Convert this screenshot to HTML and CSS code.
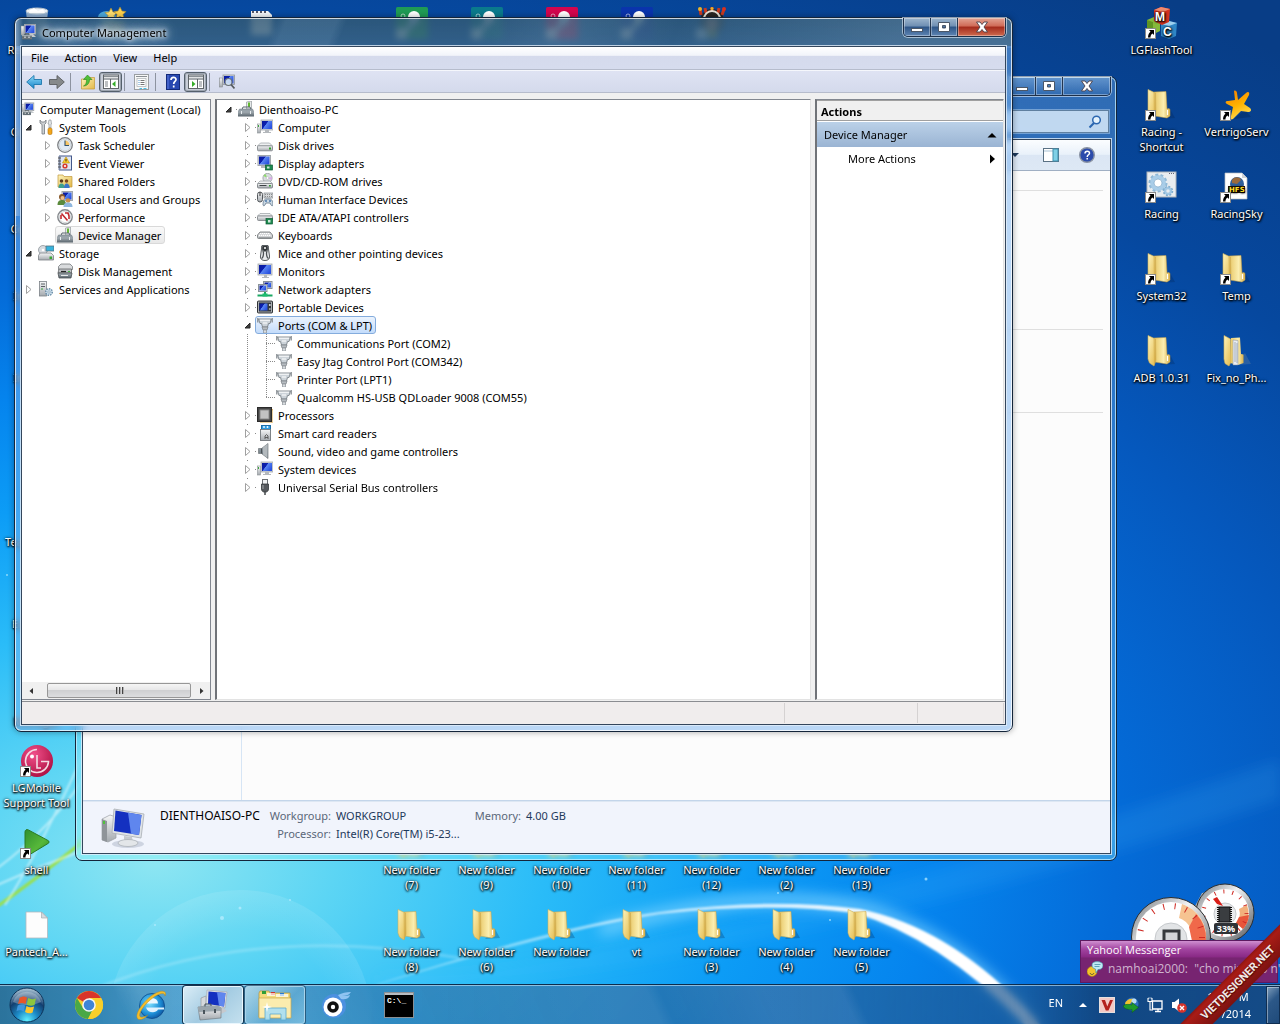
FILE: index.html
```html
<!DOCTYPE html>
<html lang="en">
<head>
    <meta charset="UTF-8">
    <title>Computer Management</title>
    <link rel="stylesheet" href="styles.css">
</head>
<body>

<!-- icon sprite -->
<svg class="sprite" width="0" height="0" aria-hidden="true">
    <defs>
        <linearGradient id="gScreen" x1="0" y1="0" x2="1" y2="0.6">
            <stop offset="0" stop-color="#0a1c9c"/><stop offset="0.45" stop-color="#0b1fb0"/>
            <stop offset="0.5" stop-color="#5a86f2"/><stop offset="1" stop-color="#2a52e0"/>
        </linearGradient>
        <linearGradient id="gMetal" x1="0" y1="0" x2="0" y2="1">
            <stop offset="0" stop-color="#f6f7f8"/><stop offset="1" stop-color="#a4a9ae"/>
        </linearGradient>
        <linearGradient id="gDark" x1="0" y1="0" x2="0" y2="1">
            <stop offset="0" stop-color="#a9b2b8"/><stop offset="1" stop-color="#58646c"/>
        </linearGradient>
        <linearGradient id="gGold" x1="0" y1="0" x2="1" y2="1">
            <stop offset="0" stop-color="#fdf3bb"/><stop offset="1" stop-color="#e3b94a"/>
        </linearGradient>
        <linearGradient id="gGold2" x1="0" y1="0" x2="1" y2="0">
            <stop offset="0" stop-color="#e8c766"/><stop offset="0.6" stop-color="#fbeeb0"/><stop offset="1" stop-color="#d9b04a"/>
        </linearGradient>
        <linearGradient id="gBlueArrow" x1="0" y1="0" x2="0" y2="1">
            <stop offset="0" stop-color="#8fdcfa"/><stop offset="1" stop-color="#1583c8"/>
        </linearGradient>
        <radialGradient id="gOrb" cx="0.5" cy="0.95" r="0.9">
            <stop offset="0" stop-color="#5ff0ff"/><stop offset="0.35" stop-color="#1d8cc8"/>
            <stop offset="0.7" stop-color="#123f70"/><stop offset="1" stop-color="#9fb9cc"/>
        </radialGradient>
        <radialGradient id="gIe" cx="0.4" cy="0.4" r="0.7">
            <stop offset="0" stop-color="#7fe0ff"/><stop offset="0.6" stop-color="#1e90d8"/><stop offset="1" stop-color="#0a4a96"/>
        </radialGradient>
        <radialGradient id="gLg" cx="0.4" cy="0.3" r="0.8">
            <stop offset="0" stop-color="#f0508a"/><stop offset="1" stop-color="#a80a3c"/>
        </radialGradient>
        <linearGradient id="gPlay" x1="0" y1="0" x2="1" y2="1">
            <stop offset="0" stop-color="#2f8f30"/><stop offset="0.6" stop-color="#57b83a"/><stop offset="1" stop-color="#2e8a22"/>
        </linearGradient>
        <linearGradient id="gStar" x1="0" y1="0" x2="0.4" y2="1">
            <stop offset="0" stop-color="#f57c00"/><stop offset="0.6" stop-color="#ffb300"/><stop offset="1" stop-color="#ffd84a"/>
        </linearGradient>
    </defs>

    <symbol id="i-monitor" viewBox="0 0 16 16">
        <rect x="1" y="1" width="14" height="11" fill="#d5d8dc" stroke="#a3a8ad" stroke-width="0.8"/>
        <rect x="2" y="2" width="12" height="9" fill="url(#gScreen)"/>
        <path d="M7 12h3v2h2v1H5v-1h2z" fill="#b4b8bc"/>
    </symbol>
    <symbol id="i-computer" viewBox="0 0 16 16">
        <rect x="0.5" y="5" width="3" height="9" fill="url(#gMetal)" stroke="#8b9094" stroke-width="0.6"/>
        <rect x="1" y="6" width="1" height="2" fill="#3aa63a"/>
        <rect x="4" y="1" width="12" height="10" fill="#d0d4d8" stroke="#a3a8ad" stroke-width="0.8"/>
        <rect x="5" y="2" width="10" height="8" fill="url(#gScreen)"/>
        <path d="M8 11h4v2h2v1H6v-1h2z" fill="#b4b8bc"/>
    </symbol>
    <symbol id="i-mgmt" viewBox="0 0 16 16">
        <rect x="0" y="2" width="3" height="9" fill="url(#gMetal)" stroke="#8b9094" stroke-width="0.5"/>
        <rect x="3.5" y="0.5" width="11" height="9.5" fill="#d0d4d8" stroke="#9ca2a8"/>
        <rect x="4.5" y="1.5" width="9" height="7.5" fill="url(#gScreen)"/>
        <path d="M8 10h4l3 3H7z" fill="#c3c8cc"/>
        <rect x="1" y="11" width="10" height="4.5" fill="url(#gDark)"/>
        <path d="M4 11V9.700h4V11M1 13h10" fill="none" stroke="#3e474e" stroke-width="0.8"/>
        <path d="M4 12.500v1.500M8 12.500v1.500" stroke="#fff"/>
    </symbol>
    <symbol id="i-devmgr" viewBox="0 0 16 16">
        <path d="M8.500 1l5-1v8h-5z" fill="#e6e9ea" stroke="#949a9e" stroke-width="0.7"/>
        <path d="M11 1.500v4.500" stroke="#63b82f" stroke-width="2"/>
        <path d="M4 8.500L5 6h7l1 2.500" fill="none" stroke="#5c6870"/>
        <path d="M1.500 8h13l1.500 3H0z" fill="#98a3aa" stroke="#6a757c" stroke-width="0.5"/>
        <rect y="10.500" width="16" height="5" fill="url(#gDark)"/>
        <path d="M3.500 10v3M12.500 10v3" stroke="#e8edf0"/>
    </symbol>
    <symbol id="i-tools" viewBox="0 0 16 16">
        <path d="M2 1v3l2 1.500V15h2.500V5.500L8 4V1L6.500 3h-3z" fill="#cdd1d4" stroke="#74797d" stroke-width="0.8"/>
        <path d="M11 1l-1 4h1v4h2V5h.5L13 1z" fill="#e4e7e9" stroke="#84898d" stroke-width="0.6"/>
        <rect x="10" y="9" width="4" height="6.500" rx="1.500" fill="#f3a61b" stroke="#b06f08" stroke-width="0.6"/>
    </symbol>
    <symbol id="i-clock" viewBox="0 0 16 16">
        <circle cx="8" cy="8" r="7.300" fill="#eef3f8" stroke="#7d8084" stroke-width="1.300"/>
        <circle cx="8" cy="8" r="5.800" fill="#dfeaf5" stroke="#c3c7ca" stroke-width="0.6"/>
        <path d="M8 8h4.500A4.500 4.500 0 0 0 8 3.500z" fill="#f7c667"/>
        <path d="M8 3.500V8.500h4" fill="none" stroke="#33556f" stroke-width="1.100"/>
    </symbol>
    <symbol id="i-event" viewBox="0 0 16 16">
        <rect x="2.500" y="1" width="12" height="14" fill="#dfe6f3" stroke="#44598b"/>
        <path d="M2.500 1v14" stroke="#7d8aa8" stroke-width="2"/>
        <path d="M1 3h3M1 6h3M1 9h3M1 12h3" stroke="#555"/>
        <path d="M9 2l3.500 6h-7z" fill="#ffcf2e" stroke="#b48a00" stroke-width="0.6"/>
        <path d="M9 4v2.500" stroke="#000" stroke-width="0.8"/>
        <circle cx="8" cy="11" r="2.600" fill="#d63a2f"/>
        <path d="M7 10l2 2M9 10l-2 2" stroke="#fff" stroke-width="0.800"/>
    </symbol>
    <symbol id="i-shared" viewBox="0 0 16 16">
        <path d="M1 2h5l1 1.500h8V14H1z" fill="url(#gGold)" stroke="#c1983b" stroke-width="0.7"/>
        <circle cx="4.500" cy="8" r="1.800" fill="#5a3a1e"/>
        <circle cx="9.500" cy="8" r="1.800" fill="#7b4a22"/>
        <path d="M1.500 15c0-3 1-4.500 3-4.500s3 1.500 3 4.500z" fill="#3fa08f"/>
        <path d="M7 15c0-3 1-4.500 2.700-4.500s3 1.500 3 4.500z" fill="#3b76c9"/>
    </symbol>
    <symbol id="i-users" viewBox="0 0 16 16">
        <rect x="5" y="0.500" width="10.500" height="9" fill="#d0d4d8" stroke="#a3a8ad"/>
        <rect x="6" y="1.500" width="8.500" height="7" fill="url(#gScreen)"/>
        <circle cx="5" cy="6" r="3" fill="#8a5a2b"/>
        <circle cx="5.500" cy="7" r="2" fill="#efbf8d"/>
        <path d="M0.500 14c0-4 2-5 4.500-5s4 1 4 5z" fill="#5b8a3c"/>
        <circle cx="11" cy="9.500" r="2.300" fill="#c98f4b"/>
        <path d="M6.500 16c0-3.500 2-4.500 4.500-4.500s4.500 1 4.500 4.500z" fill="#8fb7de"/>
    </symbol>
    <symbol id="i-perf" viewBox="0 0 16 16">
        <circle cx="8" cy="8" r="7.200" fill="#fff" stroke="#84888c" stroke-width="1.400"/>
        <circle cx="8" cy="8" r="5.600" fill="none" stroke="#d4d7d9"/>
        <path d="M4.500 4.500L10.500 11.500M4 6v4M8 4h3l1 3v3" fill="none" stroke="#c2272d" stroke-width="1.600"/>
    </symbol>
    <symbol id="i-storage" viewBox="0 0 16 16">
        <circle cx="5" cy="5" r="4.500" fill="#d6dbe0" stroke="#8e959b" stroke-width="0.8"/>
        <circle cx="5" cy="5" r="1.300" fill="#fff"/>
        <rect x="8" y="1" width="8" height="5" fill="#38b3dc" stroke="#57727f" stroke-width="0.8"/>
        <path d="M2 8h11l2.500 2.500v4.500H0.500v-4.500z" fill="url(#gMetal)" stroke="#7c8287" stroke-width="0.8"/>
        <rect x="11.500" y="11.500" width="2.500" height="2.500" fill="#39a735"/>
    </symbol>
    <symbol id="i-diskmgmt" viewBox="0 0 16 16">
        <path d="M4 1h9l2.500 2.500v3H1.500v-3z" fill="#d9dbdd" stroke="#75797c" stroke-width="0.8"/>
        <path d="M2 6h12.500v4H1z" fill="#bfc2c5" stroke="#5f6366" stroke-width="0.8"/>
        <path d="M1 10h14l-1 5H2z" fill="url(#gDark)" stroke="#4d5154" stroke-width="0.8"/>
        <path d="M4 8.500h5" stroke="#222" stroke-width="1.200"/><path d="M11 8.500h2" stroke="#3fb83c" stroke-width="1.200"/>
        <path d="M4 12.500h7" stroke="#e8eaeb"/>
    </symbol>
    <symbol id="i-services" viewBox="0 0 16 16">
        <rect x="1.500" y="0.500" width="7" height="14.500" fill="url(#gMetal)" stroke="#7c8287" stroke-width="0.8"/>
        <path d="M3 3h4M3 5.500h4" stroke="#5b6065"/><path d="M3 8h2" stroke="#3aa63a"/>
        <circle cx="11" cy="11" r="3.300" fill="#cfe1ee" stroke="#6d90aa" stroke-width="1.500" stroke-dasharray="1.500 1"/>
        <circle cx="11" cy="11" r="1.200" fill="#fff" stroke="#6d90aa" stroke-width="0.7"/>
    </symbol>
    <symbol id="i-disk" viewBox="0 0 16 16">
        <path d="M3.500 6h9L15.500 9H0.500z" fill="#eef0f1" stroke="#9a9fa3" stroke-width="0.7"/>
        <rect x="0.500" y="8.800" width="15" height="5" rx="1" fill="url(#gMetal)" stroke="#84898d" stroke-width="0.9"/>
        <rect x="12" y="10.500" width="2" height="2" fill="#2f9e2c"/>
    </symbol>
    <symbol id="i-display" viewBox="0 0 16 16">
        <rect x="1" y="0.500" width="12.500" height="10" fill="#d5d8dc" stroke="#a3a8ad"/>
        <rect x="2" y="1.500" width="10.500" height="8" fill="url(#gScreen)"/>
        <path d="M4 11h5v2H4z" fill="#b4b8bc"/>
        <rect x="8.500" y="10" width="7" height="5" fill="#1d8a50" stroke="#0e5a32" stroke-width="0.7"/>
        <rect x="10" y="11.500" width="2.500" height="2" fill="#cfe7d8"/>
    </symbol>
    <symbol id="i-dvd" viewBox="0 0 16 16">
        <circle cx="10.500" cy="5" r="4.600" fill="#d8dcdf" stroke="#979ca0" stroke-width="0.8"/>
        <path d="M10.500 5l-2-4a4.500 4.500 0 0 0-2 2z" fill="#8edb6b"/><path d="M10.500 5l4 2a4.500 4.500 0 0 0 .3-3z" fill="#d9a7e8"/>
        <circle cx="10.500" cy="5" r="1.400" fill="#fff" stroke="#a5aaad" stroke-width="0.5"/>
        <path d="M3 8h10l2.500 2.500H0.500z" fill="#eef0f1" stroke="#9a9fa3" stroke-width="0.7"/>
        <rect x="0.500" y="10.500" width="15" height="4.500" rx="1" fill="url(#gMetal)" stroke="#7d8286" stroke-width="0.9"/>
        <path d="M2.500 12.500h7" stroke="#3d4245"/><rect x="12" y="12" width="1.800" height="1.500" fill="#2f9e2c"/>
    </symbol>
    <symbol id="i-hid" viewBox="0 0 16 16">
        <rect x="0.500" y="1" width="5" height="10" rx="2.500" fill="url(#gMetal)" stroke="#54595d"/>
        <path d="M3 1v4" stroke="#333"/>
        <rect x="7" y="2" width="9" height="5" fill="#d5d8da" stroke="#84898d" stroke-width="0.7"/>
        <path d="M8 3.500h7M8 5.500h7" stroke="#777" stroke-width="0.8" stroke-dasharray="1 1"/>
        <path d="M6 14c0-4 1.500-6 3-6h4c1.500 0 3 2 3 6-1 2-2 0-3-2H9c-1 2-2 4-3 2z" fill="#c9d8e4" stroke="#5f7486" stroke-width="0.8"/>
        <circle cx="9" cy="10" r="0.900" fill="#3b6ea5"/><circle cx="13" cy="10" r="0.900" fill="#3b6ea5"/>
    </symbol>
    <symbol id="i-ide" viewBox="0 0 16 16">
        <path d="M3 4.500h10L15.500 7H0.500z" fill="#eef0f1" stroke="#9a9fa3" stroke-width="0.7"/>
        <rect x="0.500" y="7" width="15" height="4.500" rx="1" fill="url(#gMetal)" stroke="#84898d" stroke-width="0.9"/>
        <rect x="9" y="9.500" width="6.500" height="5.500" fill="#1d8a50" stroke="#0e5a32" stroke-width="0.7"/>
        <rect x="11" y="11" width="2.500" height="2.500" fill="#cfe7d8"/>
    </symbol>
    <symbol id="i-keyboard" viewBox="0 0 16 16">
        <path d="M3 5h10l2.500 3v2.500a1 1 0 0 1-1 1h-13a1 1 0 0 1-1-1V8z" fill="#d0d2d4" stroke="#6d7174" stroke-width="0.8"/>
        <path d="M3 6.500h10M2 8.300h12" stroke="#fff" stroke-width="1.200" stroke-dasharray="1.300 0.700"/>
        <path d="M1.500 10.500h13" stroke="#8c9093" stroke-width="0.8"/>
    </symbol>
    <symbol id="i-mouse" viewBox="0 0 16 16">
        <path d="M5 0.500h6L12.500 11c.5 3-1.500 4.500-4.500 4.500S3 14 3.500 11z" fill="#e9ebed" stroke="#565b5f"/>
        <path d="M5 1l1.500 7c0 3-1 5-2 5.500M11 1L9.500 8c0 3 1 5 2 5.500" fill="none" stroke="#4a4f53" stroke-width="1.300"/>
        <path d="M6 1h4v4L8 7 6 5z" fill="#33373a"/>
        <circle cx="8" cy="3" r="1" fill="#fff"/>
    </symbol>
    <symbol id="i-network" viewBox="0 0 16 16">
        <rect x="6.500" y="0.500" width="8.500" height="7" fill="#dfe4e8" stroke="#8a9299"/>
        <rect x="7.500" y="1.500" width="6.500" height="5" fill="url(#gScreen)"/>
        <rect x="1.500" y="3.500" width="8.500" height="7" fill="#dfe4e8" stroke="#8a9299"/>
        <rect x="2.500" y="4.500" width="6.500" height="5" fill="url(#gScreen)"/>
        <path d="M0.500 14.500h15M8 11v3" stroke="#19a862" stroke-width="2"/>
        <rect x="5.500" y="12.500" width="5" height="3" fill="#1fbd70"/>
    </symbol>
    <symbol id="i-portable" viewBox="0 0 16 16">
        <rect x="0.500" y="2" width="15" height="12" rx="1" fill="#33383d" stroke="#16191c" stroke-width="0.8"/>
        <rect x="1.500" y="3" width="13" height="10" fill="none" stroke="#c8ccd0" stroke-width="0.8"/>
        <rect x="2.500" y="4.500" width="8" height="7" fill="url(#gScreen)"/>
        <circle cx="12.800" cy="6" r="1" fill="#e0e3e6"/><circle cx="12.800" cy="10" r="1" fill="#a1a6aa"/>
    </symbol>
    <symbol id="i-port" viewBox="0 0 16 16">
        <path d="M1.500 2h13l-1.500 4.500h-1.500L10.500 10h-5L4.500 6.500H3z" fill="#ccd3d9" stroke="#7b8288" stroke-width="0.900"/>
        <path d="M0.800 1v4.500M15.200 1v4.500" stroke="#868c91" stroke-width="1.300"/>
        <path d="M3 3.200h10M6 6h4" stroke="#fff"/>
        <path d="M5 10h6l-1 3H6z" fill="#b6bcc1" stroke="#7b8186" stroke-width="0.700"/>
        <path d="M6.500 13h3v3h-3z" fill="#d9dde0" stroke="#8b9196" stroke-width="0.700"/>
    </symbol>
    <symbol id="i-cpu" viewBox="0 0 16 16">
        <rect x="3" y="3" width="12.500" height="12.500" fill="none" stroke="#d9a441" stroke-width="1.500" stroke-dasharray="1 1"/>
        <rect x="0.500" y="0.500" width="14" height="14" fill="#454545" stroke="#2a2a2a"/>
        <rect x="3" y="3" width="9" height="9" fill="#c2c2c2" stroke="#8b8b8b"/>
    </symbol>
    <symbol id="i-smart" viewBox="0 0 16 16">
        <rect x="4.500" y="0.500" width="9" height="5" fill="#2e9be0" stroke="#1a6ea8"/>
        <path d="M7 1v2M10.500 1v2" stroke="#e8f5ff" stroke-width="1.500"/>
        <rect x="3.500" y="4.500" width="10" height="11" fill="url(#gMetal)" stroke="#74797d" stroke-width="0.9"/>
        <path d="M8 14v-3l1.500-1.500L11 11v3M8 12.500h3" fill="none" stroke="#555" stroke-width="0.900"/>
    </symbol>
    <symbol id="i-sound" viewBox="0 0 16 16">
        <path d="M1.500 5.500h3L11 0.500v15L4.500 10.500h-3z" fill="url(#gDark)" stroke="#60666a" stroke-width="0.6"/>
        <path d="M6 4.500v7L10.500 15V1z" fill="#b3b9bd"/>
        <path d="M4.500 5.500v5" stroke="#4b5155"/>
    </symbol>
    <symbol id="i-usb" viewBox="0 0 16 16">
        <rect x="5.500" y="0.500" width="5" height="5" fill="#f1f2f3" stroke="#6b6f73"/>
        <path d="M4.500 5h7v5c0 2-1.500 3-2.500 3H7c-1 0-2.500-1-2.500-3z" fill="#55595d" stroke="#34373a" stroke-width="0.8"/>
        <path d="M6 6v4" stroke="#a4a8ab"/><path d="M8 13v3" stroke="#44484b" stroke-width="1.500"/>
    </symbol>

    <symbol id="i-back" viewBox="0 0 16 16">
        <path d="M0.700 8L8 1.500v4h7.500v5H8v4z" fill="url(#gBlueArrow)" stroke="#1d78ae" stroke-width="0.9"/>
    </symbol>
    <symbol id="i-fwd" viewBox="0 0 16 16">
        <path d="M15.300 8L8 1.500v4H0.500v5H8v4z" fill="#86898b" stroke="#5b5e60" stroke-width="0.9"/>
    </symbol>
    <symbol id="i-up" viewBox="0 0 16 16">
        <path d="M1.500 5h5l1-1.500h7V15h-13z" fill="url(#gGold)" stroke="#c39a37" stroke-width="0.7"/>
        <path d="M3.500 12c3-1.500 3-4 3-6.500h-3L7.500 1 12 5.500H9.500c0 4-2.500 6.500-6 6.500z" fill="#4fc03a" stroke="#26821b" stroke-width="0.6"/>
    </symbol>
    <symbol id="i-pane-l" viewBox="0 0 16 16">
        <rect x="0.500" y="1" width="15" height="13.500" fill="#fff" stroke="#5f6468"/>
        <path d="M1 2.500h14M1 5h14" stroke="#8a9095" stroke-width="1.300"/><path d="M7.500 5v9" stroke="#5f6468"/>
        <path d="M2 8h3M2 10h3M2 12h3" stroke="#7c8287"/><path d="M12.500 7v6L9 10z" fill="#35ad28"/>
    </symbol>
    <symbol id="i-pane-r" viewBox="0 0 16 16">
        <rect x="0.500" y="1" width="15" height="13.500" fill="#fff" stroke="#5f6468"/>
        <path d="M1 2.500h14M1 5h14" stroke="#8a9095" stroke-width="1.300"/><path d="M9.500 5v9" stroke="#5f6468"/>
        <path d="M11 8h3M11 10h3M11 12h3" stroke="#7c8287"/><path d="M4 7v6l3.500-3z" fill="#35ad28"/>
    </symbol>
    <symbol id="i-props" viewBox="0 0 16 16">
        <rect x="0.500" y="0.500" width="14" height="15" fill="#f7f7f7" stroke="#9a9ea2"/>
        <path d="M2 2.500h11" stroke="#8a8f94"/>
        <rect x="3" y="4.500" width="9" height="8" fill="#fff" stroke="#b4b8bb" stroke-width="0.8"/>
        <path d="M4.500 6.500h1M4.500 8.500h1M4.500 10.500h1" stroke="#4a90c8"/><path d="M6.500 6.500h4M6.500 8.500h4M6.500 10.500h4" stroke="#777"/>
        <path d="M5.500 14.500h2.500M9.500 14.500h3" stroke="#49bfe6"/>
    </symbol>
    <symbol id="i-help" viewBox="0 0 16 16">
        <rect x="1.500" y="0.500" width="13" height="15" fill="#2747b0" stroke="#132a7a"/>
        <path d="M3 1v14" stroke="#5d7be0"/>
        <path d="M6 6c0-3.500 5-3.500 5-.5 0 2-2.300 2-2.300 4.500M8.700 11.500v2" fill="none" stroke="#fff" stroke-width="1.700"/>
    </symbol>
    <symbol id="i-scan" viewBox="0 0 16 16">
        <rect x="0.500" y="4" width="3" height="9" fill="url(#gMetal)" stroke="#84898d" stroke-width="0.6"/>
        <rect x="4" y="1" width="11.500" height="9.500" fill="#d0d4d8" stroke="#8f959a" stroke-width="0.8"/>
        <rect x="5" y="2" width="9.500" height="7.500" fill="url(#gScreen)"/>
        <circle cx="9.500" cy="8" r="3.500" fill="#d9e9f6" fill-opacity="0.85" stroke="#6a7177" stroke-width="1.200"/>
        <path d="M12 10.500l3.500 4" stroke="#555a5e" stroke-width="1.800"/>
    </symbol>

    <symbol id="i-folder" viewBox="0 0 32 32">
        <path d="M14 30L29 29 24 20z" fill="#00204a" fill-opacity="0.25"/>
        <path d="M8 3L20 2.500 21 20 22.500 19.500Q24 19.500 24 21V27L21 29 9 27z" fill="url(#gGold2)" stroke="#c9a34a" stroke-width="0.5"/>
        <path d="M2 0.500L9.500 4 10 25 8 31 3.500 28 2 24z" fill="url(#gGold)" stroke="#cfae58" stroke-width="0.6"/>
        <path d="M7.500 3.500L9.500 4 10 25 8 31z" fill="#c99f3d" fill-opacity="0.5"/>
        <path d="M21.500 21v5" stroke="#fff" stroke-width="1.200"/>
    </symbol>
    <symbol id="i-folder-full" viewBox="0 0 32 32">
        <path d="M14 30L30 29 24 18z" fill="#5f7da0" fill-opacity="0.4"/>
        <path d="M10 3L19 2.500 20 19 22.500 19.500V28L17 30 9 28z" fill="url(#gGold2)"/>
        <path d="M12 5L17 5.500V30L12 30z" fill="#e9edf2" stroke="#888f98" stroke-width="0.5"/>
        <path d="M14 7v20M16 8v20" stroke="#8792a2" stroke-width="0.700"/>
        <path d="M3 0.500L9.500 4 10 27 8 31 4 28.500 3 24z" fill="url(#gGold)" stroke="#cfae58" stroke-width="0.6"/>
    </symbol>
    <symbol id="i-shortcut" viewBox="0 0 11 11">
        <rect x="0.500" y="0.500" width="10" height="10" fill="#fff" stroke="#8a8a8a"/>
        <path d="M4 2h5v5L7.500 5.500C6 6.500 5.500 7.500 5.500 9.500H3C3 7 4 5 5.500 3.800z" fill="#000"/>
    </symbol>
    <symbol id="i-blocks" viewBox="0 0 32 32">
        <path d="M1 13l7-3 6 2v12l-6 3-7-3z" fill="#86b93c"/><path d="M1 13l6 2v12l-6-3z" fill="#5f9424"/>
        <path d="M15 17l8-3 8 2-1 13-7 3-8-3z" fill="#2f86c6"/><path d="M15 17l8-3 8 2-8 3z" fill="#9fd0ee"/>
        <path d="M8 3l7-3 9 2-1 13-7 3-8-4z" fill="#d4311f"/><path d="M8 3l7-3 9 2-7 3z" fill="#f08a70"/>
        <text x="9" y="14" class="block-letter">M</text><text x="17" y="29" class="block-letter">C</text>
    </symbol>
    <symbol id="i-star" viewBox="0 0 32 32">
        <path d="M13 30L30 28 24 21z" fill="#00204a" fill-opacity="0.3"/>
        <path d="M13 2c1-1 3 0 3 2l1 7 8-7c2-2 4-1 3 2l-5 9 6 4c2 2 1 4-2 4l-7-1-8 8c-2 1-3 0-2-3l2-9-6-3c-2-1-2-3 1-3l7-1z" fill="url(#gStar)"/>
    </symbol>
    <symbol id="i-gears" viewBox="0 0 32 32">
        <rect x="1" y="1" width="29" height="25" fill="#e8ecf0" stroke="#aeb4ba"/>
        <path d="M23 2.500h6" stroke="#667" stroke-dasharray="1 1"/>
        <circle cx="12" cy="12" r="6" fill="none" stroke="#a9cde8" stroke-width="4"/>
        <circle cx="12" cy="12" r="8.500" fill="none" stroke="#8fb9d8" stroke-width="2" stroke-dasharray="3 2.300"/>
        <circle cx="12" cy="12" r="4" fill="#fff" stroke="#7ea9ca" stroke-width="0.700"/>
        <circle cx="22" cy="20" r="3" fill="none" stroke="#a3c8e4" stroke-width="2.500"/>
        <circle cx="22" cy="20" r="4.500" fill="none" stroke="#7fadcf" stroke-width="1.500" stroke-dasharray="2 1.500"/>
    </symbol>
    <symbol id="i-hfs" viewBox="0 0 32 32">
        <path d="M4 2h17l5 5v21H4z" fill="#fff" stroke="#b9bdc2" stroke-width="0.7"/><path d="M21 2v5h5z" fill="#cfd3d8"/>
        <circle cx="16" cy="13" r="7" fill="#2f5f9a"/><path d="M11 9c3-4 8-3 9 0l-4 4-5-1z" fill="#9b6a3c"/>
        <rect x="7" y="15" width="17" height="7" fill="#201400"/>
        <text x="8" y="21" class="hfs-letter">HFS</text>
    </symbol>
    <symbol id="i-lg" viewBox="0 0 32 32">
        <circle cx="16" cy="16" r="16" fill="url(#gLg)"/>
        <path d="M16 4.500a11.500 11.500 0 1 0 11.500 12H20" fill="none" stroke="#f3dbe3" stroke-width="1.600"/>
        <path d="M16 10v13h4" fill="none" stroke="#f3dbe3" stroke-width="1.600"/><circle cx="11" cy="11.500" r="2" fill="#fff"/>
    </symbol>
    <symbol id="i-play" viewBox="0 0 32 32">
        <path d="M4 5c0-2 1.500-3 3.500-2L27 13.500c1.500 1 1.500 2 0 3L8 28c-2 1-4 0-4-2z" fill="url(#gPlay)" stroke="#2a7a25"/>
    </symbol>
    <symbol id="i-page" viewBox="0 0 32 32">
        <path d="M5 3h15.500l6 6v20H5z" fill="#fdfdfd" stroke="#b3b9bf" stroke-width="0.8"/><path d="M20.500 3v6h6z" fill="#d6dade" stroke="#9ea4aa" stroke-width="0.6"/>
    </symbol>
    <symbol id="i-bin" viewBox="0 0 32 32">
        <ellipse cx="16" cy="4" rx="11" ry="3" fill="#eef3f7" stroke="#b5c0ca"/>
        <path d="M5 5l3 25h16l3-25z" fill="#c9d8e4" fill-opacity="0.7"/><path d="M9 3l4-2 4 3 5-2 2 4H8z" fill="#fff"/>
    </symbol>
    <symbol id="i-live" viewBox="0 0 32 32">
        <ellipse cx="11" cy="10" rx="9" ry="6" fill="#4ba7dc"/>
        <path d="M15 1l2 4 4 .5-3 3 1 4-4-2-4 2 1-4-3-3 4-.5z" fill="#ffdf70" stroke="#a8862c" stroke-width="0.6"/>
        <path d="M24 0l2 4 4 .5-3 3 1 4-4-2-4 2 1-4-3-3 4-.5z" fill="#ffd34e" stroke="#a8862c" stroke-width="0.6"/>
        <path d="M6 14h22v14H6z" fill="#e2d8a0" fill-opacity="0.8"/>
    </symbol>
    <symbol id="i-notepad" viewBox="0 0 32 32">
        <path d="M5 4h17l4 4v20H5z" fill="#f4f7fa"/><path d="M6 5h15" stroke="#556" stroke-width="2" stroke-dasharray="2 2"/>
    </symbol>
    <symbol id="i-tile" viewBox="0 0 32 32">
        <rect width="32" height="32" rx="1.500" fill="currentColor"/>
        <circle cx="18" cy="10" r="6" fill="#fff"/><path d="M15 14h7L10 26H6z" fill="#cfe3f0"/>
        <circle cx="7" cy="9" r="2" fill="none" stroke="#fff" stroke-opacity="0.6"/>
        <rect y="21" width="11" height="11" fill="#fff" fill-opacity="0.8"/>
    </symbol>
    <symbol id="i-jester" viewBox="0 0 32 32">
        <circle cx="16" cy="14" r="12" fill="#2a2522"/>
        <path d="M5 8L4 2M10 6L9 1M16 5V0M22 6l1-5M26 8l2-6" stroke="#c8391f" stroke-width="3"/>
        <circle cx="4" cy="2" r="2" fill="#e9b32b"/><circle cx="16" cy="1.500" r="1.500" fill="#e9b32b"/><circle cx="28" cy="2" r="2" fill="#d9311f"/>
        <path d="M8 12a8 8 0 0 1 16 0" fill="none" stroke="#e7e0d6" stroke-width="2"/>
        <circle cx="16" cy="17" r="6" fill="#c77c5a"/><path d="M12 23h9v8h-9z" fill="#8b8a3c"/>
        <rect y="21" width="11" height="11" fill="#fff" fill-opacity="0.7"/>
    </symbol>
    <symbol id="i-pc-large" viewBox="0 0 48 42">
        <ellipse cx="28" cy="37" rx="16" ry="4" fill="#9aa5b8" fill-opacity="0.4"/>
        <path d="M2 12l8-4 6 2v21l-8 4-6-2z" fill="url(#gMetal)" stroke="#999ea3" stroke-width="0.7"/>
        <path d="M2 12l5 2v21l-5-2z" fill="#8f9499"/><rect x="3" y="14" width="2" height="3" fill="#4fc23c"/>
        <path d="M14 2l30 5-3 24-29-5z" fill="#dfe3e7" stroke="#a8adb3" stroke-width="0.8"/>
        <path d="M15.500 3.500L41.500 8l-2.500 20-25-4z" fill="#1430c0"/>
        <path d="M28 5.600L41.500 8 39 28l-8-1.300z" fill="#5f86ee"/>
        <path d="M24 29l8 1 1 5h-9z" fill="#c5c9ce"/><ellipse cx="28" cy="36" rx="10" ry="3.500" fill="#e3e6e9" stroke="#a8adb3" stroke-width="0.7"/>
    </symbol>
    <symbol id="i-start" viewBox="0 0 36 36">
        <circle cx="18" cy="18" r="17" fill="url(#gOrb)" stroke="#0d3258"/>
        <path d="M4 15a14.500 14 0 0 1 28 0c-8 4-20 4-28 0z" fill="#fff" fill-opacity="0.28"/>
        <path d="M10.500 11c3-2 5-2 7.500-.5l-1.500 6.500c-2.500-1.500-5-1.500-7.500 0z" fill="#e8562a"/>
        <path d="M19 11c3 1.500 5.500 1.500 8 .2L25.500 18c-2.500 1.200-5 1-7.700-.3z" fill="#8cc63e"/>
        <path d="M8.700 18.500c2.500-1.500 5-1.500 7.500 0l-1.500 6c-2.500-1.500-5-1.500-7.200-.3z" fill="#3e95dd"/>
        <path d="M17.500 19c2.500 1.500 5 1.500 7.600.4l-1.500 6c-2.600 1.300-5 1-7.500-.4z" fill="#fbc62d"/>
    </symbol>
    <symbol id="i-chrome" viewBox="0 0 32 32">
        <circle cx="16" cy="16" r="14" fill="#f8cf2a"/>
        <path d="M16 16L3.900 9A14 14 0 0 1 28.100 9H16z" fill="#d8352a"/>
        <path d="M3.900 9A14 14 0 0 0 15 30l6-11-5 3-6-3z" fill="#4aa846"/>
        <path d="M28.100 9H16l6 7-7 14A14 14 0 0 0 28.100 9z" fill="#f8cf2a"/>
        <circle cx="16" cy="16" r="6.800" fill="#f4f6f8"/><circle cx="16" cy="16" r="5.300" fill="#3f84d6"/>
    </symbol>
    <symbol id="i-ie" viewBox="0 0 32 32">
        <circle cx="17" cy="17" r="12.500" fill="url(#gIe)" stroke="#0c4a8c" stroke-width="0.8"/>
        <path d="M11 14.500a6 5.500 0 0 1 12 0z" fill="#eaf7ff"/>
        <path d="M11 18.500h18v2h-6c-2 4-10 4-12-2z" fill="#dff2ff"/>
        <path d="M3 30C-2 26 10 9 22 3.500 29 0.500 32 3 30 7 30 3 25 4 19 8 9 15 3 25 5 27.500c1 1.500 5 .5 8-1.500-4 4-8 5.500-10 4z" fill="#f3bd2d" stroke="#b98310" stroke-width="0.4"/>
    </symbol>
    <symbol id="i-mmc" viewBox="0 0 32 32">
        <path d="M4 9l5-2v9l-5 2z" fill="#d4d8db" stroke="#8b9094" stroke-width="0.6"/>
        <path d="M10 1l20 2-2 16-19-3z" fill="#dfe3e7" stroke="#a8adb3" stroke-width="0.7"/>
        <path d="M11.500 2.500L28.500 4 27 17.500l-16-2.500z" fill="#1430c0"/><path d="M20 3.200L28.500 4 27 17.500l-5-.8z" fill="#5f86ee"/>
        <path d="M21 18h4l5 4-6 3z" fill="#c5c9ce"/>
        <path d="M1 18l20-1 3 2v10L3 31z" fill="url(#gMetal)" stroke="#6a7278" stroke-width="0.6"/>
        <path d="M1 18l20-1 3 2v3L2 23z" fill="#9aa5ac"/>
        <path d="M8 17.500v-2.500h6v2" fill="none" stroke="#47525a"/>
        <path d="M7 21v4M18 20v4" stroke="#4a545b" stroke-width="2"/>
    </symbol>
    <symbol id="i-explorer" viewBox="0 0 34 32">
        <path d="M1 4l1-2h9l1 2h20v24H1z" fill="#f3da7d" stroke="#b8923a" stroke-width="0.7"/>
        <path d="M4 2h4v3H4z" fill="#2e9e39"/><path d="M13 3h4v3h-4z" fill="#d2342a"/><path d="M22 4h4v3h-4z" fill="#2a7bd0"/>
        <path d="M9 4h8v3H9zM18 5h12v3H18z" fill="#fff" fill-opacity="0.7"/>
        <path d="M1 9h32v20H1z" fill="#fbecae" stroke="#caa64c" stroke-width="0.7"/>
        <path d="M7 19h21v12h-5v-6H12v6H7z" fill="#a8dff5" fill-opacity="0.9" stroke="#5aa9cf" stroke-width="0.8"/>
        <path d="M9 13l1 4 4 1-4 1-1 4-1-4-4-1 4-1z" fill="#fff"/>
    </symbol>
    <symbol id="i-eye" viewBox="0 0 32 32">
        <circle cx="13" cy="17" r="12" fill="#4b90e0"/><circle cx="12" cy="18" r="9.500" fill="#fff"/>
        <circle cx="12" cy="18" r="5.800" fill="#111"/><circle cx="12" cy="18" r="2.200" fill="#fff"/>
        <path d="M17 6c4-2 8-3 13-3-2 3-5 4-9 4 4 0 6 0 8-1-1 4-5 5-9 4z" fill="#8fc4f2"/>
    </symbol>
    <symbol id="i-cmd" viewBox="0 0 30 26">
        <rect x="0.500" y="0.500" width="29" height="25" fill="#000" stroke="#8b8f93"/>
        <path d="M1 2h28" stroke="#b9bdc1" stroke-width="2"/>
        <text x="3" y="11" class="cmd-letter">C:\_</text>
    </symbol>
    <symbol id="i-v" viewBox="0 0 16 16">
        <rect x="0.500" y="0.500" width="15" height="15" fill="#f3c9c5" stroke="#e6e0df"/>
        <path d="M2.500 3h3.500l2.300 6.500L11 3h3L9.500 13.500H6.800z" fill="#b3201d"/>
    </symbol>
    <symbol id="i-idm" viewBox="0 0 16 16">
        <circle cx="9" cy="7" r="6.500" fill="#2d6fc4"/><path d="M2 6c2-4 6-5 9-4l-4 5-4 2z" fill="#f0c22e"/>
        <circle cx="11" cy="4" r="2.500" fill="#b9dcf5"/>
        <path d="M0 9c2-2 6-2 9-1V5.500l6.500 5-6.500 5v-3c-4 0-7 0-9-3.500z" fill="#1f9a2c" stroke="#0c5a14" stroke-width="0.5"/>
    </symbol>
    <symbol id="i-lan" viewBox="0 0 16 16">
        <path d="M5.500 4h9.500v8H5.500zM8 14.500h6M11 12v2" fill="none" stroke="#fff" stroke-width="1.300"/>
        <path d="M1 1v3.500h4V1M3 4.500V13h3M2 0.500v1M4 0.500v1" fill="none" stroke="#fff" stroke-width="1.100"/>
    </symbol>
    <symbol id="i-mute" viewBox="0 0 16 16">
        <path d="M1 5h2.500L8 1.500v13L3.500 11H1z" fill="#fff"/>
        <circle cx="11" cy="11" r="4.800" fill="#d8342a"/><path d="M9 9l4 4M13 9l-4 4" stroke="#fff" stroke-width="1.400"/>
    </symbol>
    <symbol id="i-ym" viewBox="0 0 16 16">
        <circle cx="5" cy="10.500" r="5" fill="#f4c22c" stroke="#a87a0c" stroke-width="0.6"/>
        <path d="M3 12c1 2 3 2 4 0" fill="none" stroke="#553"/>
        <path d="M5 4c0-5 11-4 11 0s-3 4.500-5 4.500L9 12 8.500 8C6 7.500 5 6 5 4z" fill="#bfe9f5" stroke="#4690a8" stroke-width="0.7"/>
        <path d="M7.500 3.500h6M7.500 5.500h5" stroke="#4690a8" stroke-width="0.8"/>
    </symbol>

    <symbol id="e-closed" viewBox="0 0 13 16"><path d="M4.500 4.500L9 8.500 4.500 12.500z" fill="#fff" stroke="#a0a0a0"/></symbol>
    <symbol id="e-open" viewBox="0 0 13 16"><path d="M9 6v5H4z" fill="#404040" stroke="#262626"/></symbol>
    <symbol id="w-min" viewBox="0 0 14 12"><rect x="1.500" y="7.500" width="11" height="3" fill="#fff" stroke="#4b5768"/></symbol>
    <symbol id="w-max" viewBox="0 0 14 12"><path d="M1.500 1.500h11v9h-11zM5.500 4.500h3v2.500h-3z" fill="#fff" fill-rule="evenodd" stroke="#4b5768"/></symbol>
    <symbol id="w-close" viewBox="0 0 14 12"><path d="M1.500 1h3.500l2 2.500L9 1h3.500L9 6l3.500 5H9L7 8.500 5 11H1.500L5 6z" fill="#fff" stroke="#4b4048" stroke-width="0.9"/></symbol>
</svg>

<div class="desktop">
    <svg class="wallpaper" viewBox="0 0 1280 1024" preserveAspectRatio="none" aria-hidden="true">
        <defs>
            <filter id="blurS" x="-10%" y="-30%" width="120%" height="160%"><feGaussianBlur stdDeviation="1"/></filter>
            <filter id="blurL" x="-10%" y="-30%" width="120%" height="160%"><feGaussianBlur stdDeviation="7"/></filter>
            <linearGradient id="gArc" x1="0" y1="0" x2="1" y2="0">
                <stop offset="0" stop-color="#fff" stop-opacity="0.25"/><stop offset="0.6" stop-color="#fff" stop-opacity="0.8"/><stop offset="0.8" stop-color="#fff"/>
            </linearGradient>
            <radialGradient id="gBubble"><stop offset="0.7" stop-color="#fff" stop-opacity="0"/><stop offset="1" stop-color="#fff" stop-opacity="0.1"/></radialGradient>
        </defs>
        <path d="M380 975Q620 985 1280 760V800Q800 960 380 990z" fill="#4fc3ff" fill-opacity="0.14" filter="url(#blurL)"/>
        <circle cx="240" cy="1022" r="132" fill="url(#gBubble)"/>
        <path d="M70 1000Q240 920 460 958" fill="none" stroke="#fff" stroke-opacity="0.2" stroke-width="3" filter="url(#blurS)"/>
        <path d="M600 930Q770 880 880 914Q980 950 1050 1050" fill="none" stroke="#7fd4ff" stroke-opacity="0.7" stroke-width="14" filter="url(#blurL)"/>
        <path d="M377 984Q560 925 660 912Q770 897 860 909Q962 930 1050 1036L1036 1036Q945 940 855 913Q770 902 660 914Q560 930 377 985z" fill="url(#gArc)" filter="url(#blurS)"/>
        <path d="M-5 908Q35 880 90 836" fill="none" stroke="#9be04a" stroke-width="3" filter="url(#blurS)"/>
        <path d="M-5 886Q40 866 90 848M-5 870Q50 830 90 770M5 905Q40 850 90 740" fill="none" stroke="#fff" stroke-opacity="0.5" stroke-width="2" filter="url(#blurS)"/>
        <g fill="#bdeeff" fill-opacity="0.7">
            <circle cx="222" cy="918" r="2"/><circle cx="240" cy="908" r="1.500"/><circle cx="290" cy="900" r="1"/><circle cx="155" cy="925" r="1"/>
            <circle cx="926" cy="879" r="1.500"/><circle cx="778" cy="893" r="1"/><circle cx="830" cy="920" r="1"/><circle cx="36" cy="933" r="1"/><circle cx="7" cy="575" r="1"/>
        </g>
    </svg>

    <div class="icons">
        <a href="#" class="shortcut c0 r0"><svg><use href="#i-bin"/></svg><span>Recycle Bin</span></a>
        <a href="#" class="shortcut c0 r1"><span class="low">Computer</span></a>
        <a href="#" class="shortcut c0 r2"><span class="low">USB<br>Computer</span></a>
        <a href="#" class="shortcut c0 r3"><span class="low">Infinity B</span></a>
        <a href="#" class="shortcut c0 r4"><span class="low">Infinity B</span></a>
        <a href="#" class="shortcut c0 r6"><span class="low">TeamViewer</span></a>
        <a href="#" class="shortcut c0 r7"><span class="low">EasySuite</span></a>
        <a href="#" class="shortcut c0 r8"><span class="low">USB<br>Manager</span></a>
        <a href="#" class="shortcut c0 r9"><svg><use href="#i-lg"/></svg><svg class="arrow"><use href="#i-shortcut"/></svg><span>LGMobile Support Tool</span></a>
        <a href="#" class="shortcut c0 r10"><svg><use href="#i-play"/></svg><svg class="arrow"><use href="#i-shortcut"/></svg><span>shell</span></a>
        <a href="#" class="shortcut c0 r11"><svg><use href="#i-page"/></svg><span>Pantech_A...</span></a>

        <a href="#" class="shortcut c1 r0" aria-label="Live"><svg><use href="#i-live"/></svg></a>
        <a href="#" class="shortcut c3 r0" aria-label="Notes"><svg><use href="#i-notepad"/></svg></a>
        <a href="#" class="shortcut c5 r0 green" aria-label="Tool"><svg><use href="#i-tile"/></svg></a>
        <a href="#" class="shortcut c6 r0 teal" aria-label="Tool"><svg><use href="#i-tile"/></svg></a>
        <a href="#" class="shortcut c7 r0 red" aria-label="Tool"><svg><use href="#i-tile"/></svg></a>
        <a href="#" class="shortcut c8 r0 navy" aria-label="Tool"><svg><use href="#i-tile"/></svg></a>
        <a href="#" class="shortcut c9 r0" aria-label="Tool"><svg><use href="#i-jester"/></svg></a>

        <a href="#" class="shortcut c5 r10"><svg><use href="#i-folder"/></svg><span>New folder (7)</span></a>
        <a href="#" class="shortcut c6 r10"><svg><use href="#i-folder"/></svg><span>New folder (9)</span></a>
        <a href="#" class="shortcut c7 r10"><svg><use href="#i-folder"/></svg><span>New folder (10)</span></a>
        <a href="#" class="shortcut c8 r10"><svg><use href="#i-folder"/></svg><span>New folder (11)</span></a>
        <a href="#" class="shortcut c9 r10"><svg><use href="#i-folder"/></svg><span>New folder (12)</span></a>
        <a href="#" class="shortcut c10 r10"><svg><use href="#i-folder"/></svg><span>New folder (2)</span></a>
        <a href="#" class="shortcut c11 r10"><svg><use href="#i-folder"/></svg><span>New folder (13)</span></a>
        <a href="#" class="shortcut c5 r11"><svg><use href="#i-folder"/></svg><span>New folder (8)</span></a>
        <a href="#" class="shortcut c6 r11"><svg><use href="#i-folder"/></svg><span>New folder (6)</span></a>
        <a href="#" class="shortcut c7 r11"><svg><use href="#i-folder"/></svg><span>New folder</span></a>
        <a href="#" class="shortcut c8 r11"><svg><use href="#i-folder"/></svg><span>vt</span></a>
        <a href="#" class="shortcut c9 r11"><svg><use href="#i-folder"/></svg><span>New folder (3)</span></a>
        <a href="#" class="shortcut c10 r11"><svg><use href="#i-folder"/></svg><span>New folder (4)</span></a>
        <a href="#" class="shortcut c11 r11"><svg><use href="#i-folder"/></svg><span>New folder (5)</span></a>

        <a href="#" class="shortcut c15 r0"><svg><use href="#i-blocks"/></svg><svg class="arrow"><use href="#i-shortcut"/></svg><span>LGFlashTool</span></a>
        <a href="#" class="shortcut c15 r1"><svg><use href="#i-folder"/></svg><svg class="arrow"><use href="#i-shortcut"/></svg><span>Racing - Shortcut</span></a>
        <a href="#" class="shortcut c15 r2"><svg><use href="#i-gears"/></svg><svg class="arrow"><use href="#i-shortcut"/></svg><span>Racing</span></a>
        <a href="#" class="shortcut c15 r3"><svg><use href="#i-folder"/></svg><svg class="arrow"><use href="#i-shortcut"/></svg><span>System32</span></a>
        <a href="#" class="shortcut c15 r4"><svg><use href="#i-folder"/></svg><span>ADB 1.0.31</span></a>
        <a href="#" class="shortcut c16 r1"><svg><use href="#i-star"/></svg><svg class="arrow"><use href="#i-shortcut"/></svg><span>VertrigoServ</span></a>
        <a href="#" class="shortcut c16 r2"><svg><use href="#i-hfs"/></svg><svg class="arrow"><use href="#i-shortcut"/></svg><span>RacingSky</span></a>
        <a href="#" class="shortcut c16 r3"><svg><use href="#i-folder"/></svg><svg class="arrow"><use href="#i-shortcut"/></svg><span>Temp</span></a>
        <a href="#" class="shortcut c16 r4"><svg><use href="#i-folder-full"/></svg><span>Fix_no_Ph...</span></a>
    </div>

    <!-- explorer window behind -->
    <section class="window explorer">
        <header class="titlebar">
            <div class="captions">
                <button aria-label="Minimize"><svg><use href="#w-min"/></svg></button>
                <button aria-label="Maximize"><svg><use href="#w-max"/></svg></button>
                <button class="close" aria-label="Close"><svg><use href="#w-close"/></svg></button>
            </div>
        </header>
        <div class="address">
            <label class="search">
                <input type="search" aria-label="Search">
                <svg viewBox="0 0 14 14"><circle cx="8.500" cy="5" r="3.800" fill="#e4f2fc" stroke="#2c67b0" stroke-width="1.500"/><path d="M6 8L1.500 12.500" stroke="#2c67b0" stroke-width="2"/></svg>
            </label>
        </div>
        <div class="client">
            <div class="commandbar">
                <button aria-label="Change your view"><svg viewBox="0 0 16 16"><path d="M4 6h8l-4 4z" fill="#1e395b"/></svg></button>
                <button aria-label="Preview pane"><svg viewBox="0 0 16 16"><rect x="0.500" y="1.500" width="15" height="13" fill="#fff" stroke="#5a7184"/><path d="M1 4h14" stroke="#a9c3d6"/><rect x="10" y="2" width="5" height="12" fill="#7fd0e6" stroke="#3f8fae"/></svg></button>
                <button aria-label="Help"><svg viewBox="0 0 16 16"><circle cx="8" cy="8" r="7.300" fill="#2b4bab" stroke="#8a93a3" stroke-width="1.400"/><path d="M6 6.500c0-3 4.500-3 4.500-.3 0 1.600-2.300 1.600-2.300 3.800M8.200 11v1.500" fill="none" stroke="#fff" stroke-width="1.500"/></svg></button>
            </div>
            <div class="explorer-body">
                <div class="nav-pane"></div>
                <div class="content-pane"><hr class="rule1"><hr class="rule2"><hr class="rule3"></div>
            </div>
            <div class="details">
                <svg class="pc"><use href="#i-pc-large"/></svg>
                <strong>DIENTHOAISO-PC</strong>
                <dl>
                    <dt>Workgroup:</dt><dd>WORKGROUP</dd><dt class="memory">Memory:</dt><dd>4.00 GB</dd>
                    <dt>Processor:</dt><dd>Intel(R) Core(TM) i5-23...</dd>
                </dl>
            </div>
        </div>
    </section>

    <!-- computer management -->
    <section class="window management">
        <header class="titlebar">
            <svg class="ico"><use href="#i-mgmt"/></svg>
            <h1>Computer Management</h1>
            <div class="captions">
                <button aria-label="Minimize"><svg><use href="#w-min"/></svg></button>
                <button aria-label="Maximize"><svg><use href="#w-max"/></svg></button>
                <button class="close" aria-label="Close"><svg><use href="#w-close"/></svg></button>
            </div>
        </header>
        <div class="client">
            <nav class="menubar">
                <button>File</button>
                <button>Action</button>
                <button>View</button>
                <button>Help</button>
            </nav>
            <div class="toolbar">
                <button aria-label="Back"><svg class="ico"><use href="#i-back"/></svg></button>
                <button aria-label="Forward"><svg class="ico"><use href="#i-fwd"/></svg></button>
                <i class="sep"></i>
                <button aria-label="Up"><svg class="ico"><use href="#i-up"/></svg></button>
                <button class="pressed" aria-label="Show or hide console tree"><svg class="ico"><use href="#i-pane-l"/></svg></button>
                <i class="sep"></i>
                <button aria-label="Properties"><svg class="ico"><use href="#i-props"/></svg></button>
                <i class="sep"></i>
                <button aria-label="Help"><svg class="ico"><use href="#i-help"/></svg></button>
                <button class="pressed" aria-label="Show or hide action pane"><svg class="ico"><use href="#i-pane-r"/></svg></button>
                <i class="sep"></i>
                <button aria-label="Scan for hardware changes"><svg class="ico"><use href="#i-scan"/></svg></button>
            </div>

            <div class="panes">
                <div class="pane console">
                    <ul class="tree">
                        <li class="root"><div class="row"><span class="node"><svg class="ico"><use href="#i-mgmt"/></svg>Computer Management (Local)</span></div></li>
                        <li>
                            <div class="row"><button class="exp" aria-label="Collapse"><svg><use href="#e-open"/></svg></button><span class="node"><svg class="ico"><use href="#i-tools"/></svg>System Tools</span></div>
                            <ul>
                                <li><div class="row"><button class="exp" aria-label="Expand"><svg><use href="#e-closed"/></svg></button><span class="node"><svg class="ico"><use href="#i-clock"/></svg>Task Scheduler</span></div></li>
                                <li><div class="row"><button class="exp" aria-label="Expand"><svg><use href="#e-closed"/></svg></button><span class="node"><svg class="ico"><use href="#i-event"/></svg>Event Viewer</span></div></li>
                                <li><div class="row"><button class="exp" aria-label="Expand"><svg><use href="#e-closed"/></svg></button><span class="node"><svg class="ico"><use href="#i-shared"/></svg>Shared Folders</span></div></li>
                                <li><div class="row"><button class="exp" aria-label="Expand"><svg><use href="#e-closed"/></svg></button><span class="node"><svg class="ico"><use href="#i-users"/></svg>Local Users and Groups</span></div></li>
                                <li><div class="row"><button class="exp" aria-label="Expand"><svg><use href="#e-closed"/></svg></button><span class="node"><svg class="ico"><use href="#i-perf"/></svg>Performance</span></div></li>
                                <li><div class="row"><i class="exp"></i><span class="node current"><svg class="ico"><use href="#i-devmgr"/></svg>Device Manager</span></div></li>
                            </ul>
                        </li>
                        <li>
                            <div class="row"><button class="exp" aria-label="Collapse"><svg><use href="#e-open"/></svg></button><span class="node"><svg class="ico"><use href="#i-storage"/></svg>Storage</span></div>
                            <ul>
                                <li><div class="row"><i class="exp"></i><span class="node"><svg class="ico"><use href="#i-diskmgmt"/></svg>Disk Management</span></div></li>
                            </ul>
                        </li>
                        <li><div class="row"><button class="exp" aria-label="Expand"><svg><use href="#e-closed"/></svg></button><span class="node"><svg class="ico"><use href="#i-services"/></svg>Services and Applications</span></div></li>
                    </ul>
                    <div class="hscroll">
                        <button aria-label="Scroll left"><svg viewBox="0 0 8 8"><path d="M6 1v6L2.500 4z" fill="#333"/></svg></button>
                        <div class="track"><div class="thumb"><i></i><i></i><i></i></div></div>
                        <button aria-label="Scroll right"><svg viewBox="0 0 8 8"><path d="M2 1v6l3.500-3z" fill="#333"/></svg></button>
                    </div>
                </div>

                <div class="pane devices">
                    <ul class="tree lines">
                        <li>
                            <div class="row"><button class="exp" aria-label="Collapse"><svg><use href="#e-open"/></svg></button><span class="node"><svg class="ico"><use href="#i-devmgr"/></svg>Dienthoaiso-PC</span></div>
                            <ul>
                                <li><div class="row"><button class="exp" aria-label="Expand"><svg><use href="#e-closed"/></svg></button><span class="node"><svg class="ico"><use href="#i-computer"/></svg>Computer</span></div></li>
                                <li><div class="row"><button class="exp" aria-label="Expand"><svg><use href="#e-closed"/></svg></button><span class="node"><svg class="ico"><use href="#i-disk"/></svg>Disk drives</span></div></li>
                                <li><div class="row"><button class="exp" aria-label="Expand"><svg><use href="#e-closed"/></svg></button><span class="node"><svg class="ico"><use href="#i-display"/></svg>Display adapters</span></div></li>
                                <li><div class="row"><button class="exp" aria-label="Expand"><svg><use href="#e-closed"/></svg></button><span class="node"><svg class="ico"><use href="#i-dvd"/></svg>DVD/CD-ROM drives</span></div></li>
                                <li><div class="row"><button class="exp" aria-label="Expand"><svg><use href="#e-closed"/></svg></button><span class="node"><svg class="ico"><use href="#i-hid"/></svg>Human Interface Devices</span></div></li>
                                <li><div class="row"><button class="exp" aria-label="Expand"><svg><use href="#e-closed"/></svg></button><span class="node"><svg class="ico"><use href="#i-ide"/></svg>IDE ATA/ATAPI controllers</span></div></li>
                                <li><div class="row"><button class="exp" aria-label="Expand"><svg><use href="#e-closed"/></svg></button><span class="node"><svg class="ico"><use href="#i-keyboard"/></svg>Keyboards</span></div></li>
                                <li><div class="row"><button class="exp" aria-label="Expand"><svg><use href="#e-closed"/></svg></button><span class="node"><svg class="ico"><use href="#i-mouse"/></svg>Mice and other pointing devices</span></div></li>
                                <li><div class="row"><button class="exp" aria-label="Expand"><svg><use href="#e-closed"/></svg></button><span class="node"><svg class="ico"><use href="#i-monitor"/></svg>Monitors</span></div></li>
                                <li><div class="row"><button class="exp" aria-label="Expand"><svg><use href="#e-closed"/></svg></button><span class="node"><svg class="ico"><use href="#i-network"/></svg>Network adapters</span></div></li>
                                <li><div class="row"><button class="exp" aria-label="Expand"><svg><use href="#e-closed"/></svg></button><span class="node"><svg class="ico"><use href="#i-portable"/></svg>Portable Devices</span></div></li>
                                <li>
                                    <div class="row"><button class="exp" aria-label="Collapse"><svg><use href="#e-open"/></svg></button><span class="node selected"><svg class="ico"><use href="#i-port"/></svg>Ports (COM &amp; LPT)</span></div>
                                    <ul>
                                        <li><div class="row"><i class="exp"></i><span class="node"><svg class="ico"><use href="#i-port"/></svg>Communications Port (COM2)</span></div></li>
                                        <li><div class="row"><i class="exp"></i><span class="node"><svg class="ico"><use href="#i-port"/></svg>Easy Jtag Control Port (COM342)</span></div></li>
                                        <li><div class="row"><i class="exp"></i><span class="node"><svg class="ico"><use href="#i-port"/></svg>Printer Port (LPT1)</span></div></li>
                                        <li><div class="row"><i class="exp"></i><span class="node"><svg class="ico"><use href="#i-port"/></svg>Qualcomm HS-USB QDLoader 9008 (COM55)</span></div></li>
                                    </ul>
                                </li>
                                <li><div class="row"><button class="exp" aria-label="Expand"><svg><use href="#e-closed"/></svg></button><span class="node"><svg class="ico"><use href="#i-cpu"/></svg>Processors</span></div></li>
                                <li><div class="row"><button class="exp" aria-label="Expand"><svg><use href="#e-closed"/></svg></button><span class="node"><svg class="ico"><use href="#i-smart"/></svg>Smart card readers</span></div></li>
                                <li><div class="row"><button class="exp" aria-label="Expand"><svg><use href="#e-closed"/></svg></button><span class="node"><svg class="ico"><use href="#i-sound"/></svg>Sound, video and game controllers</span></div></li>
                                <li><div class="row"><button class="exp" aria-label="Expand"><svg><use href="#e-closed"/></svg></button><span class="node"><svg class="ico"><use href="#i-computer"/></svg>System devices</span></div></li>
                                <li><div class="row"><button class="exp" aria-label="Expand"><svg><use href="#e-closed"/></svg></button><span class="node"><svg class="ico"><use href="#i-usb"/></svg>Universal Serial Bus controllers</span></div></li>
                            </ul>
                        </li>
                    </ul>
                </div>

                <div class="pane actions">
                    <h2>Actions</h2>
                    <button class="group">Device Manager <svg viewBox="0 0 10 10"><path d="M0.500 7.500h9L5 3z" fill="#000"/></svg></button>
                    <button class="item">More Actions <svg viewBox="0 0 10 10"><path d="M3 0.500v9L8 5z" fill="#000"/></svg></button>
                </div>
            </div>
            <footer class="statusbar"><span></span><span></span><span></span></footer>
        </div>
    </section>

    <!-- cpu meter gadget -->
    <svg class="gadget" viewBox="0 0 126 60">
        <defs>
            <linearGradient id="gRim" x1="0" y1="0" x2="1" y2="1">
                <stop offset="0" stop-color="#6f7478"/><stop offset="0.4" stop-color="#f1f2f3"/><stop offset="1" stop-color="#4b4f53"/>
            </linearGradient>
        </defs>
        <path d="M57 40L72 12 104 6 112 54 80 58z" fill="#aeb2b6"/>
        <circle cx="95" cy="32" r="29" fill="url(#gRim)" stroke="#2b2e31"/>
        <circle cx="95" cy="32" r="24" fill="#fff"/>
        <path d="M117 24a24 24 0 0 1-4 24l-7-6a14 14 0 0 0 3-14z" fill="#f2b07c"/><path d="M119 34a24 24 0 0 1-6 14l-7-6 3-6z" fill="#e8563a"/>
        <circle cx="95" cy="32" r="21.500" fill="none" stroke="#cf2a24" stroke-width="4" stroke-dasharray="1 8"/>
        <circle cx="95" cy="33" r="11" fill="#e8eaec" stroke="#c6c9cc"/>
        <rect x="89" y="26" width="11" height="15" fill="#3a3d40" stroke="#111"/><path d="M88 26v15M101 26v15" stroke="#111" stroke-width="2" stroke-dasharray="1 1"/>
        <path d="M83 18l4-2 6 9-6-2z" fill="#d81e18"/>
        <rect x="84" y="42" width="24" height="11" rx="2" fill="#2f3236"/>
        <text x="96" y="51" class="gauge-text">33%</text>
        <circle cx="41" cy="56" r="39.500" fill="url(#gRim)" stroke="#2b2e31"/>
        <circle cx="41" cy="56" r="35" fill="#fff"/>
        <path d="M52 23a35 35 0 0 1 24 37H62a20 20 0 0 0-13-23z" fill="#f6c391"/><path d="M66 33a35 35 0 0 1 10 27H62l-3-14z" fill="#f0694a"/>
        <circle cx="41" cy="56" r="31" fill="none" stroke="#cf2a24" stroke-width="6" stroke-dasharray="1 10.500"/>
        <circle cx="41" cy="58" r="16" fill="#e2e4e6" stroke="#c6c9cc"/>
        <rect x="34" y="50" width="15" height="14" fill="#d3d5d7" stroke="#35383b" stroke-width="3"/>
    </svg>

    <aside class="toast">
        <h2>Yahoo! Messenger</h2>
        <p><svg class="ico"><use href="#i-ym"/></svg>namhoai2000:&nbsp; "cho minh so n"</p>
    </aside>

    <footer class="taskbar">
        <button class="start" aria-label="Start"><svg><use href="#i-start"/></svg></button>
        <button class="task" aria-label="Chrome"><svg><use href="#i-chrome"/></svg></button>
        <button class="task" aria-label="Internet Explorer"><svg><use href="#i-ie"/></svg></button>
        <button class="task active" aria-label="Computer Management"><svg><use href="#i-mmc"/></svg></button>
        <button class="task open" aria-label="Windows Explorer"><svg><use href="#i-explorer"/></svg></button>
        <button class="task" aria-label="Viewer"><svg><use href="#i-eye"/></svg></button>
        <button class="task" aria-label="Command Prompt"><svg class="cmd"><use href="#i-cmd"/></svg></button>
        <div class="tray">
            <span class="lang">EN</span>
            <button aria-label="Show hidden icons"><svg class="ico" viewBox="0 0 16 16"><path d="M4 10h8L8 6z" fill="#fff"/></svg></button>
            <svg class="ico"><use href="#i-v"/></svg>
            <svg class="ico"><use href="#i-idm"/></svg>
            <svg class="ico"><use href="#i-lan"/></svg>
            <svg class="ico"><use href="#i-mute"/></svg>
            <time>1:17 PM<br>5/7/2014</time>
            <button class="peek" aria-label="Show desktop"></button>
        </div>
    </footer>

    <div class="ribbon"><span>VIETDESIGNER.NET</span></div>
</div>

</body>
</html>
```

FILE: styles.css
```css
* {
    box-sizing: border-box;
}
html, body {
    height: 100%;
}
body {
    margin: 0;
    overflow: hidden;
    font-family: "Noto Sans", "Open Sans", sans-serif;
    font-size: 11px;
    line-height: 15px;
    color: #000;
}
button {
    margin: 0;
    padding: 0;
    border: 0;
    background: none;
    font: inherit;
    color: inherit;
}
h1, h2, p, dl, dd, ul {
    margin: 0;
    padding: 0;
    font-size: inherit;
}
.sprite {
    position: absolute;
}
.ico {
    width: 16px;
    height: 16px;
    flex: none;
}

/* desktop */
.desktop {
    position: relative;
    height: 100%;
    overflow: hidden;
    background: radial-gradient(1300px 780px at 12% 84%, #8ee6f2 0, #5cd5f4 14%, #2abcf8 30%, #0c9cf6 46%, #0584ee 60%, #046bd8 74%, #0558bd 92%, #06489f 110%, #083d86 135%);
}
.wallpaper {
    position: absolute;
    inset: 0;
    width: 100%;
    height: 100%;
}
.icons {
    position: absolute;
    inset: 0 0 0 -1px;
    display: grid;
    grid-template-columns: repeat(17, 75px);
    grid-auto-rows: 82px;
}
.shortcut {
    position: relative;
    display: flex;
    flex-direction: column;
    align-items: center;
    gap: 3px;
    padding: 7px 0 0;
    color: #fff;
    text-align: center;
    text-decoration: none;
    text-shadow: 1px 1px 2px #000, 0 1px 2px #000, 0 0 3px rgba(0,0,0,.8);
}
.shortcut svg {
    width: 32px;
    height: 32px;
}
.shortcut .arrow {
    position: absolute;
    left: 21px;
    top: 28px;
    width: 11px;
    height: 11px;
}
.shortcut span {
    max-width: 71px;
}
.shortcut .low {
    margin-top: 35px;
}
.green { color: #1f9b55; }
.teal { color: #0a7a8c; }
.red { color: #d2064e; }
.navy { color: #0a34ac; }
.c0 { grid-column: 1; }
.c1 { grid-column: 2; }
.c3 { grid-column: 4; }
.c5 { grid-column: 6; }
.c6 { grid-column: 7; }
.c7 { grid-column: 8; }
.c8 { grid-column: 9; }
.c9 { grid-column: 10; }
.c10 { grid-column: 11; }
.c11 { grid-column: 12; }
.c15 { grid-column: 16; }
.c16 { grid-column: 17; }
.r0 { grid-row: 1; }
.r1 { grid-row: 2; }
.r2 { grid-row: 3; }
.r3 { grid-row: 4; }
.r4 { grid-row: 5; }
.r6 { grid-row: 7; }
.r7 { grid-row: 8; }
.r8 { grid-row: 9; }
.r9 { grid-row: 10; }
.r10 { grid-row: 11; }
.r11 { grid-row: 12; }
.block-letter {
    font: bold 12px "Liberation Sans", sans-serif;
    fill: #fff;
}
.hfs-letter {
    font: bold 7px "DejaVu Sans", sans-serif;
    fill: #ffdf2e;
}
.cmd-letter {
    font: bold 8px "Liberation Mono", monospace;
    fill: #fff;
}

/* windows */
.window {
    position: absolute;
    display: flex;
    flex-direction: column;
    border: 1px solid #14253a;
    border-radius: 7px;
    padding: 0 6px 6px;
    -webkit-backdrop-filter: blur(3px);
    backdrop-filter: blur(3px);
}
.explorer {
    left: 75px;
    top: 76px;
    right: 163px;
    bottom: 163px;
    padding-right: 5px;
    background: linear-gradient(rgba(90,150,215,.5), rgba(110,190,245,.35) 60%, rgba(160,255,250,.3));
    box-shadow: inset 0 0 0 1px rgba(200,240,255,.75);
}
.management {
    left: 14px;
    top: 17px;
    right: 267px;
    bottom: 292px;
    background:
        linear-gradient(90deg, rgba(170,195,225,.7), rgba(170,195,225,0) 8px) 0 0 / 100% 198px no-repeat,
        linear-gradient(112deg, rgba(255,255,255,0) 26%, rgba(160,190,215,.14) 27% 32%, rgba(255,255,255,0) 33% 46%, rgba(160,190,215,.14) 55%, rgba(255,255,255,0) 66%, rgba(160,190,215,.2) 88%) 0 0 / 100% 30px no-repeat,
        linear-gradient(rgba(35,70,90,.7), rgba(40,75,95,.6)) 0 0 / 100% 28px no-repeat,
        rgba(120,178,240,.5);
    box-shadow: inset 0 0 0 1px rgba(255,255,255,.75), 0 0 6px rgba(0,0,0,.35);
}
.titlebar {
    display: flex;
    align-items: center;
    gap: 5px;
    height: 28px;
}
.titlebar h1 {
    flex: 1;
    font-weight: normal;
    text-shadow: 0 0 4px #fff, 0 0 6px #fff, 0 0 9px #fff, 0 0 14px #dfe9f2, 0 0 18px #dfe9f2;
}
.captions {
    display: flex;
    align-self: flex-start;
    margin-left: auto;
    border: 1px solid #1e3049;
    border-top: 0;
    border-radius: 0 0 5px 5px;
    overflow: hidden;
    box-shadow: 0 0 0 1px rgba(230,240,250,.6);
}
.captions button {
    display: grid;
    place-items: center;
    width: 27px;
    height: 18px;
    border-right: 1px solid #24364f;
    background: linear-gradient(#9db5cd, #6f8fb3 45%, #2d5486 50%, #5f86b4);
    box-shadow: inset 0 0 0 1px rgba(255,255,255,.35);
}
.captions svg {
    width: 14px;
    height: 12px;
}
.captions .close {
    width: 47px;
    border-right: 0;
    background: linear-gradient(#e3a494, #cf6a56 45%, #a32a1b 50%, #cf6b4f);
}
.client {
    flex: 1;
    display: flex;
    flex-direction: column;
    min-height: 0;
    border: 1px solid #34465c;
    background: #f0f0f0;
    box-shadow: 0 0 0 1px rgba(225,238,250,.8);
}

/* explorer */
.explorer .captions button {
    background: linear-gradient(rgba(150,190,230,.5), rgba(40,90,150,.2));
}
.address {
    display: flex;
    justify-content: flex-end;
    height: 34px;
    padding: 5px 2px 0;
}
.search {
    display: flex;
    align-items: center;
    gap: 4px;
    width: 240px;
    height: 23px;
    padding: 0 6px;
    border: 1px solid #5f7f9f;
    background: rgba(225,240,252,.82);
    box-shadow: 0 0 0 1px rgba(220,240,255,.4);
}
.search input {
    flex: 1;
    min-width: 0;
    border: 0;
    background: none;
    font: inherit;
}
.search svg {
    width: 14px;
    height: 14px;
}
.commandbar {
    display: flex;
    justify-content: flex-end;
    align-items: center;
    height: 31px;
    padding-right: 15px;
    border-bottom: 1px solid #a0afc3;
    background: linear-gradient(#fbfdff, #e9f1fa 48%, #dbe6f4 50%, #dde8f5);
}
.commandbar button {
    width: 16px;
    height: 16px;
    margin-left: 20px;
}
.commandbar button:first-child {
    margin-left: 0;
}
.commandbar svg {
    display: block;
    width: 16px;
    height: 16px;
}
.explorer-body {
    flex: 1;
    display: flex;
    background: #fcfcfc;
}
.nav-pane {
    width: 159px;
    border-right: 1px solid #d6e5f5;
}
.content-pane {
    flex: 1;
    padding: 19px 7px 0 0;
}
.content-pane hr {
    margin: 0;
    border: 0;
    border-top: 1px solid #dfdfdf;
}
.content-pane .rule2 {
    margin-top: 138px;
}
.content-pane .rule3 {
    margin-top: 82px;
}
.details {
    display: flex;
    align-items: flex-start;
    height: 53px;
    padding: 6px 17px 0;
    border-top: 1px solid #c3d5ea;
    background: #f1f4fc;
    box-shadow: inset 0 1px 0 #dde7f3;
}
.details .pc {
    width: 48px;
    height: 42px;
    flex: none;
}
.details strong {
    min-width: 104px;
    margin-left: 12px;
    font-size: 12px;
    font-weight: normal;
    line-height: 18px;
}
.details dl {
    display: grid;
    grid-template-columns: 67px 131px 49px 80px;
    column-gap: 5px;
    line-height: 18px;
    color: #1e395b;
}
.details dt {
    color: #5a6779;
    text-align: right;
}

/* menu and toolbar */
.menubar {
    display: flex;
    height: 23px;
    padding: 0 0 1px 1px;
    border-bottom: 1px solid #b6bccc;
    background: linear-gradient(#fff, #f2f4fa 38%, #d5daec 42%, #d6dcee);
}
.menubar button {
    padding: 0 8px;
}
.toolbar {
    display: flex;
    align-items: center;
    height: 23px;
    padding-left: 0;
    border-top: 1px solid #f5f7fc;
    border-bottom: 1px solid #b6bccc;
    background: linear-gradient(#dfe3f3, #d4daec);
}
.toolbar button {
    display: grid;
    place-items: center;
    width: 23px;
    height: 20px;
}
.toolbar .pressed {
    border: 1px solid #55606c;
    border-radius: 3px;
    background: #c9ced8;
    box-shadow: inset 0 0 0 1px #9da5b0;
}
.toolbar .sep {
    width: 1px;
    height: 18px;
    margin: 0 5px 0 2px;
    background: #8d93a0;
}

/* panes */
.panes {
    flex: 1;
    display: grid;
    grid-template-columns: 189px 1fr 189px;
    gap: 4px;
    min-height: 0;
    padding: 6px 1px 1px 0;
}
.pane {
    display: flex;
    flex-direction: column;
    min-width: 0;
    border: 1px solid #e3e3e3;
    border-top-color: #828790;
    border-left: 2px solid #707378;
    background: #fff;
}
.console {
    border-left-width: 0;
    border-right-color: #828790;
    border-bottom-color: #828790;
}
.tree, .tree ul {
    list-style: none;
}
.tree ul {
    padding-left: 19px;
}
.devices .tree {
    padding-left: 5px;
}
.row {
    display: flex;
    align-items: center;
    gap: 1px;
    height: 18px;
}
.exp {
    width: 13px;
    height: 16px;
    flex: none;
}
.exp svg {
    display: block;
    width: 13px;
    height: 16px;
}
.node {
    display: flex;
    align-items: center;
    gap: 5px;
    height: 18px;
    padding: 0 3px 0 1px;
    border: 1px solid transparent;
    border-radius: 3px;
    white-space: nowrap;
}
.root .node {
    padding-left: 0;
    border-left: 0;
}
.root .ico {
    width: 13px;
}
.current {
    border-color: #d9d9d9;
    background: linear-gradient(#fafafa, #e8e8e8);
}
.selected {
    border-color: #84acdd;
    background: linear-gradient(#ebf3fd, #c4dcfb);
}

/* dotted guide lines */
.lines ul > li {
    background: repeating-linear-gradient(#8a8a8a 0 1px, transparent 1px 2px) 6px 0 / 1px 100% no-repeat;
}
.lines ul > li:last-child {
    background-size: 1px 9px;
}
.lines .row {
    background: repeating-linear-gradient(90deg, #8a8a8a 0 1px, transparent 1px 2px) 6px 9px / 10px 1px no-repeat;
}
.lines button.exp {
    background: #fff;
}

/* scrollbar */
.hscroll {
    display: flex;
    height: 17px;
    margin-top: auto;
    background: #f0f0f0;
}
.hscroll button {
    width: 17px;
}
.hscroll button svg {
    width: 8px;
    height: 8px;
}
.track {
    flex: 1;
    padding: 1px 2px 1px 8px;
}
.thumb {
    display: flex;
    justify-content: center;
    align-items: center;
    gap: 2px;
    height: 15px;
    border: 1px solid #979797;
    border-radius: 2px;
    background: linear-gradient(#f5f5f5, #e6e6e7 48%, #cfd0d2 50%, #dcdddf);
}
.thumb i {
    width: 1px;
    height: 7px;
    background: #444;
    box-shadow: 1px 0 0 #b0b0b0;
}

/* actions pane */
.actions h2 {
    height: 21px;
    padding: 0 4px;
    border-top: 1px solid #a0a0a0;
    border-bottom: 1px solid #a0a0a0;
    background: #f0f0f0;
    line-height: 21px;
}
.actions button {
    display: flex;
    align-items: center;
    justify-content: space-between;
    padding-right: 6px;
    text-align: left;
}
.actions svg {
    width: 10px;
    height: 10px;
}
.group {
    height: 25px;
    margin-top: 1px;
    padding-left: 7px;
    background: linear-gradient(#bbd1e8, #9ab4d3);
}
.item {
    height: 23px;
    padding-left: 31px;
}
.statusbar {
    display: flex;
    justify-content: flex-end;
    height: 23px;
    padding: 1px;
    border-top: 1px solid #8b8d91;
    background: #f0eded;
}
.statusbar span {
    width: 86px;
    border-right: 1px solid #d5d2d2;
}
.statusbar span:first-child {
    flex: 1;
}
.statusbar span:nth-child(2) {
    width: 133px;
}

/* gadget, toast */
.gadget {
    position: absolute;
    right: 24px;
    bottom: 83px;
    width: 126px;
    height: 60px;
}
.gauge-text {
    font: bold 9px "Open Sans", sans-serif;
    fill: #fff;
    text-anchor: middle;
}
.toast {
    position: absolute;
    right: 2px;
    bottom: 41px;
    width: 198px;
    height: 43px;
    padding: 1px 6px;
    border: 1px solid #5d1a60;
    background: linear-gradient(#cf8fd0, #a244a0 20%, #8a2a86 38%, #772471 42%);
    color: #fff;
    font-family: "Open Sans", "Noto Sans", sans-serif;
}
.toast h2 {
    font-weight: normal;
}
.toast p {
    display: flex;
    align-items: center;
    gap: 5px;
    margin-top: 3px;
    white-space: nowrap;
    color: #cfb4cf;
    font-size: 12px;
    line-height: 18px;
}

/* taskbar */
.taskbar {
    position: absolute;
    left: 0;
    right: 0;
    bottom: 0;
    display: flex;
    align-items: center;
    height: 40px;
    border-top: 1px solid #0d2c4c;
    background:
        linear-gradient(65deg, rgba(255,255,255,0) 10%, rgba(255,255,255,.12) 12% 20%, rgba(255,255,255,0) 30%, rgba(255,255,255,.06) 48% 51%, rgba(255,255,255,0) 52%, rgba(255,255,255,.07) 60% 66%, rgba(255,255,255,0) 67%),
        linear-gradient(90deg, rgba(40,100,140,.85), rgba(56,136,190,.8) 14%, rgba(42,122,178,.85) 40%, rgba(34,104,168,.85) 62%, rgba(28,84,140,.68) 80%, rgba(20,66,118,.85) 86%, rgba(24,72,124,.85));
    box-shadow: inset 0 1px 0 rgba(190,225,245,.65);
    -webkit-backdrop-filter: blur(3px);
    backdrop-filter: blur(3px);
}
.start {
    width: 57px;
    padding-left: 9px;
}
.start svg {
    display: block;
    width: 36px;
    height: 36px;
}
.task {
    display: grid;
    place-items: center;
    width: 60px;
    height: 38px;
    margin-left: 2px;
    border: 1px solid transparent;
    border-radius: 3px;
}
.task svg {
    width: 34px;
    height: 32px;
}
.task .cmd {
    width: 30px;
    height: 26px;
}
.task.active {
    border-color: #e9f6fd;
    background: linear-gradient(135deg, #d9ecf6, #a3cbe2 50%, #c4e0ee);
    box-shadow: 0 0 0 1px #16354f;
}
.task.open {
    border-color: #a9d3ea;
    background: linear-gradient(135deg, rgba(200,230,240,.75), rgba(110,180,215,.55) 60%, rgba(150,210,235,.6));
    box-shadow: 0 0 0 1px rgba(22,53,79,.6);
}
.tray {
    display: flex;
    align-items: center;
    align-self: stretch;
    gap: 8px;
    margin-left: auto;
    color: #fff;
}
.tray .lang {
    margin: 0 4px 5px 0;
}
.tray button .ico {
    display: block;
}
.tray time {
    width: 66px;
    line-height: 17px;
    text-align: center;
}
.tray .peek {
    align-self: stretch;
    width: 14px;
    margin: 1px 0 0 -3px;
    border: 1px solid #0f2d50;
    background: linear-gradient(135deg, #7f9dbb, #2c5888 40%, #1f4a7a);
    box-shadow: inset 1px 1px 0 rgba(255,255,255,.4);
}

/* corner ribbon */
.ribbon {
    position: absolute;
    right: 0;
    bottom: 0;
    width: 100px;
    height: 100px;
    overflow: hidden;
    pointer-events: none;
}
.ribbon span {
    position: absolute;
    left: -42px;
    top: 47px;
    width: 200px;
    background: linear-gradient(#8f1512, #a81c16 15%, #7c1210);
    color: #f3e9e6;
    font: bold 11px/23px Roboto, "Liberation Sans", sans-serif;
    text-align: center;
    text-shadow: 0 1px 1px #300;
    transform: rotate(-45deg);
}
```
